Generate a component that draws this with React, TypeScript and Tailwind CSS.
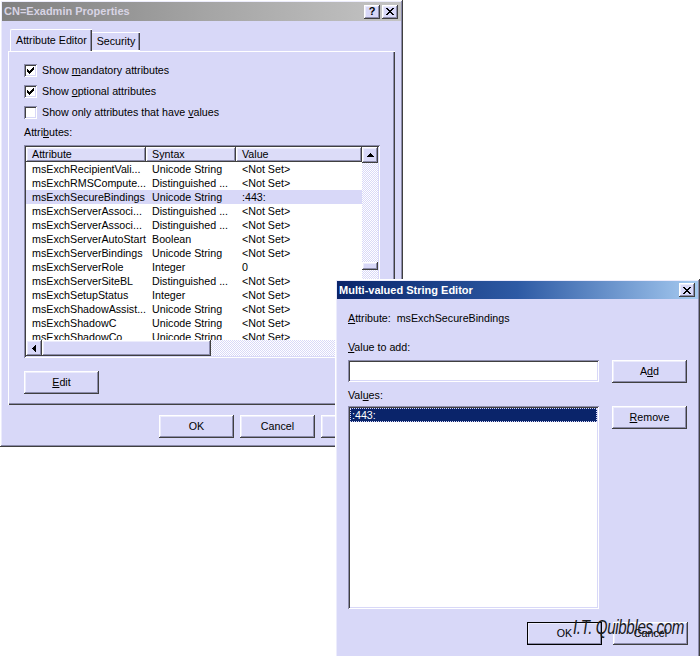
import React from 'react';

const raised =
  'shadow-[inset_-1px_-1px_#404040,inset_1px_1px_#ffffff,inset_-2px_-2px_#8c8cac,inset_2px_2px_#ececfc]';
const sunken =
  'shadow-[inset_1px_1px_#8c8cac,inset_-1px_-1px_#ffffff,inset_2px_2px_#404040,inset_-2px_-2px_#d8d8f8]';
const dither = 'bg-[image:repeating-conic-gradient(#ffffff_0%_25%,#d8d8f8_0%_50%)] bg-[length:2px_2px]';

const rows: [string, string, string][] = [
  ['msExchRecipientVali...', 'Unicode String', '<Not Set>'],
  ['msExchRMSCompute...', 'Distinguished ...', '<Not Set>'],
  ['msExchSecureBindings', 'Unicode String', ':443:'],
  ['msExchServerAssoci...', 'Distinguished ...', '<Not Set>'],
  ['msExchServerAssoci...', 'Distinguished ...', '<Not Set>'],
  ['msExchServerAutoStart', 'Boolean', '<Not Set>'],
  ['msExchServerBindings', 'Unicode String', '<Not Set>'],
  ['msExchServerRole', 'Integer', '0'],
  ['msExchServerSiteBL', 'Distinguished ...', '<Not Set>'],
  ['msExchSetupStatus', 'Integer', '<Not Set>'],
  ['msExchShadowAssist...', 'Unicode String', '<Not Set>'],
  ['msExchShadowC', 'Unicode String', '<Not Set>'],
  ['msExchShadowCo', 'Unicode String', '<Not Set>'],
];

function Button({ children, isDefault }: { children: React.ReactNode; isDefault?: boolean }) {
  return (
    <div
      className={`w-[75px] h-[23px] flex items-center justify-center bg-[#d8d8f8] ${
        isDefault ? 'outline outline-1 outline-black -outline-offset-1 ' : ''
      }${raised}`}
    >
      {children}
    </div>
  );
}

function CloseGlyph() {
  return (
    <svg width="8" height="7" viewBox="0 0 8 7">
      <path d="M0 0h2v1h1v1h2v-1h1v-1h2v1h-1v1h-1v1h-1v1h1v1h1v1h1v1h-2v-1h-1v-1h-2v1h-1v1h-2v-1h1v-1h1v-1h1v-1h-1v-1h-1v-1h-1z" fill="#000" />
    </svg>
  );
}

function Checkbox({ checked }: { checked: boolean }) {
  return (
    <div className={`w-[13px] h-[13px] bg-white ${sunken} flex items-center justify-center`}>
      {checked && (
        <svg width="7" height="7" viewBox="0 0 7 7">
          <path d="M0 2h1v1h1v1h1v-1h1v-1h1v-1h1v-1h1v3h-1v1h-1v1h-1v1h-1v1h-1v-1h-1v-1h-1z" fill="#000" />
        </svg>
      )}
    </div>
  );
}

function ListView() {
  return (
    <div className={`w-[356px] h-[213px] p-[2px] bg-white ${sunken} flex flex-col`}>
      <div className="flex flex-1 min-h-0">
        <div className="flex-1 flex flex-col overflow-hidden bg-white">
          <div className="flex h-[15px] shrink-0">
            <div className={`w-[120px] pl-[6px] flex items-center bg-[#dcdcf8] ${raised}`}>Attribute</div>
            <div className={`w-[90px] pl-[6px] flex items-center bg-[#dcdcf8] ${raised}`}>Syntax</div>
            <div className={`flex-1 pl-[6px] flex items-center bg-[#dcdcf8] ${raised}`}>Value</div>
          </div>
          {rows.map(([a, s, v], i) => (
            <div key={i} className={`flex h-[14px] shrink-0 items-center ${i === 2 ? 'bg-[#d8d8f8]' : ''}`}>
              <div className="w-[120px] pl-[6px] whitespace-nowrap">{a}</div>
              <div className="w-[90px] pl-[6px] whitespace-nowrap">{s}</div>
              <div className="flex-1 pl-[6px] whitespace-nowrap">{v}</div>
            </div>
          ))}
        </div>
        <div className={`w-[16px] flex flex-col ${dither}`}>
          <div className={`h-[16px] flex items-center justify-center bg-[#d8d8f8] ${raised}`}>
            <svg width="7" height="4" viewBox="0 0 7 4">
              <path d="M3 0h1v1h1v1h1v1h1v1h-7v-1h1v-1h1v-1h1z" fill="#000" />
            </svg>
          </div>
          <div className={`mt-[99px] h-[8px] bg-[#d8d8f8] ${raised}`} />
          <div className="flex-1" />
          <div className={`h-[16px] bg-[#d8d8f8] ${raised}`} />
        </div>
      </div>
      <div className={`h-[16px] flex shrink-0 ${dither}`}>
        <div className={`w-[16px] flex items-center justify-center bg-[#d8d8f8] ${raised}`}>
          <svg width="4" height="7" viewBox="0 0 4 7">
            <path d="M3 0h1v7h-1v-1h-1v-1h-1v-1h-1v-1h1v-1h1v-1h1z" fill="#000" />
          </svg>
        </div>
        <div className={`w-[169px] bg-[#d8d8f8] ${raised}`} />
      </div>
    </div>
  );
}

function PropertiesWindow() {
  return (
    <div className={`absolute left-0 top-0 w-[403px] h-[447px] p-[2px] bg-[#d8d8f8] ${raised} flex flex-col`}>
      <div className="h-[19px] shrink-0 flex items-center pl-[2px] pr-[3px] bg-gradient-to-r from-[#808080] via-[#a4a4a4] to-[#c4c4c4]">
        <span className="font-bold text-[#d8d4e4] text-[11px] flex-1">CN=Exadmin Properties</span>
        <div className={`w-[16px] h-[14px] flex items-center justify-center bg-[#d8d8f8] ${raised} font-bold text-[11px] leading-none`}>?</div>
        <div className={`ml-[2px] w-[16px] h-[14px] flex items-center justify-center bg-[#d8d8f8] ${raised}`}>
          <CloseGlyph />
        </div>
      </div>

      <div className="mt-[8px] ml-[8px] flex items-end h-[22px] relative z-10">
        <div className="h-[22px] px-[5px] flex items-center bg-[#d8d8f8] border-l border-t border-white rounded-tl-[2px] shadow-[inset_-1px_0_#404040,inset_-2px_0_#8c8cac]">
          Attribute Editor
        </div>
        <div className="h-[19px] px-[5px] flex items-center border-t border-white shadow-[inset_-1px_0_#404040,inset_-2px_0_#8c8cac] border-b border-b-white">
          Security
        </div>
      </div>

      <div className="ml-[6px] w-[387px] h-[354px] border-t border-l border-white shadow-[inset_-1px_-1px_#404040,inset_-2px_-2px_#8c8cac] flex flex-col pl-[15px] pt-[8px]">
        <div className="h-[21px] flex items-center gap-[5px]">
          <Checkbox checked />
          <span>
            Show <u>m</u>andatory attributes
          </span>
        </div>
        <div className="h-[21px] flex items-center gap-[5px]">
          <Checkbox checked />
          <span>
            Show <u>o</u>ptional attributes
          </span>
        </div>
        <div className="h-[21px] flex items-center gap-[5px]">
          <Checkbox checked={false} />
          <span>
            Show only attributes that have <u>v</u>alues
          </span>
        </div>
        <div className="mt-[2px] h-[14px] flex items-center">
          <span>
            Attri<u>b</u>utes:
          </span>
        </div>
        <div className="mt-[6px]">
          <ListView />
        </div>
        <div className="mt-[13px]">
          <Button>
            <u>E</u>dit
          </Button>
        </div>
      </div>

      <div className="mt-[10px] flex justify-end gap-[6px] pr-[5px]">
        <Button>OK</Button>
        <Button>Cancel</Button>
        <Button>Apply</Button>
      </div>
    </div>
  );
}

function StringEditor() {
  return (
    <div className={`absolute left-[335px] top-[279px] w-[365px] h-[400px] p-[2px] bg-[#d8d8f8] ${raised} flex flex-col`}>
      <div className="h-[18px] shrink-0 flex items-center pl-[2px] pr-[3px] bg-gradient-to-r from-[#0a246a] via-[#2e5aa4] to-[#a6caf0]">
        <span className="font-bold text-white text-[11px] flex-1">Multi-valued String Editor</span>
        <div className={`w-[16px] h-[14px] flex items-center justify-center bg-[#d8d8f8] ${raised}`}>
          <CloseGlyph />
        </div>
      </div>
      <div className="pl-[11px] flex flex-col">
        <div className="mt-[12px] h-[14px] flex items-center">
          <span>
            <u>A</u>ttribute:&nbsp; msExchSecureBindings
          </span>
        </div>
        <div className="mt-[15px] h-[14px] flex items-center">
          <span>
            <u>V</u>alue to add:
          </span>
        </div>
        <div className="mt-[6px] flex gap-[13px]">
          <div className={`w-[251px] h-[22px] bg-white ${sunken}`} />
          <Button>
            A<u>d</u>d
          </Button>
        </div>
        <div className="mt-[5px] h-[14px] flex items-center">
          <span>
            Val<u>u</u>es:
          </span>
        </div>
        <div className="mt-[4px] flex gap-[13px] items-start">
          <div className={`w-[251px] h-[203px] bg-white ${sunken} p-[2px]`}>
            <div className="h-[14px] bg-[#0a246a] text-white pl-[2px] flex items-center outline outline-1 outline-dotted outline-[#d8d8f8] -outline-offset-1">
              :443:
            </div>
          </div>
          <Button>
            <u>R</u>emove
          </Button>
        </div>
        <div className="mt-[13px] flex justify-end gap-[11px] pr-[10px]">
          <Button isDefault>OK</Button>
          <Button>Cancel</Button>
        </div>
      </div>
    </div>
  );
}

export default function App() {
  return (
    <div className="relative w-[700px] h-[656px] overflow-hidden bg-white text-black text-[10.7px] leading-[13px] font-['Liberation_Sans',Arial,sans-serif]">
      <PropertiesWindow />
      <StringEditor />
      <div className="absolute left-[573px] top-[620px] text-[21px] italic text-[#1a1a1a] tracking-[-0.5px] whitespace-nowrap origin-left scale-x-[0.72]">
        I.T. Quibbles.com
      </div>
    </div>
  );
}
